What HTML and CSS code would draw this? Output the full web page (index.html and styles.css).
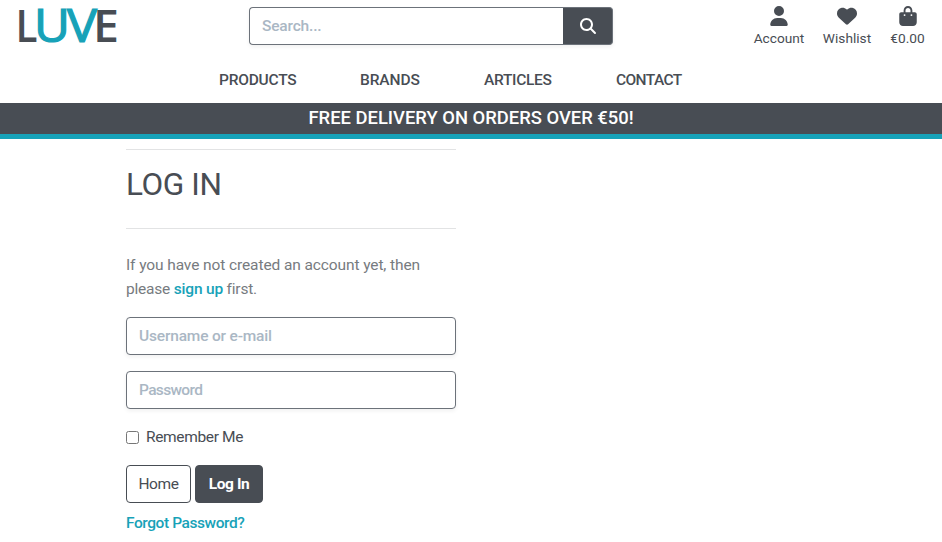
FILE: index.html
```html
<!DOCTYPE html>
<html lang="en">
<head>
<meta charset="utf-8">
<title>Log In</title>
<link rel="stylesheet" href="styles.css">
</head>
<body>
<header class="header">
  <a class="logo">
    <svg width="110" height="60" viewBox="0 0 110 60" font-size="46">
      <g class="logo-dark"><text x="-1.500" y="42" textLength="22" lengthAdjust="spacingAndGlyphs">L</text><text x="76" y="42" textLength="26" lengthAdjust="spacingAndGlyphs">E</text></g>
      <g class="logo-teal"><text x="17" y="41.500" font-size="45" textLength="36" lengthAdjust="spacingAndGlyphs">U</text><text x="50" y="41.500" font-size="45" textLength="30" lengthAdjust="spacingAndGlyphs">V</text></g>
    </svg>
  </a>
  <form class="search">
    <input class="search-input" type="text" placeholder="Search...">
    <button class="search-button" type="button" aria-label="Search">
      <svg width="16" height="16" viewBox="0 0 512 512" fill="currentColor"><path d="M416 208c0 45.900-14.900 88.300-40 122.700L502.600 457.400c12.500 12.500 12.500 32.800 0 45.300s-32.800 12.500-45.300 0L330.700 376c-34.400 25.200-76.800 40-122.700 40C93.100 416 0 322.900 0 208S93.100 0 208 0S416 93.100 416 208zM208 352a144 144 0 1 0 0-288 144 144 0 1 0 0 288z"/></svg>
    </button>
  </form>
  <div class="tools">
    <a class="tool account"><svg width="18" height="20" viewBox="0 0 448 512"><path d="M224 256A128 128 0 1 0 224 0a128 128 0 1 0 0 256zm-45.700 48C79.800 304 0 383.800 0 482.300C0 498.700 13.300 512 29.700 512H418.300c16.400 0 29.700-13.300 29.700-29.700C448 383.800 368.200 304 269.700 304H178.300z"/></svg><span>Account</span></a>
    <a class="tool wishlist"><svg width="20" height="20" viewBox="0 0 512 512"><path d="M47.600 300.400L228.300 469.100c7.500 7 17.400 10.900 27.700 10.900s20.200-3.900 27.700-10.900L464.400 300.400c30.400-28.300 47.600-68 47.600-109.500v-5.800c0-69.900-50.500-129.500-119.400-141C347 36.500 300.600 51.400 268 84L256 96 244 84c-32.600-32.600-79-47.500-124.600-39.900C50.500 55.600 0 115.200 0 185.100v5.800c0 41.500 17.200 81.200 47.600 109.500z"/></svg><span>Wishlist</span></a>
    <a class="tool bag"><svg width="18" height="20" viewBox="0 0 448 512"><path d="M160 112c0-35.300 28.700-64 64-64s64 28.700 64 64v48H160V112zm-48 48H48c-26.500 0-48 21.500-48 48V416c0 53 43 96 96 96H352c53 0 96-43 96-96V208c0-26.500-21.500-48-48-48H336V112C336 50.100 285.900 0 224 0S112 50.100 112 112v48zm24 48a24 24 0 1 1 0 48 24 24 0 1 1 0-48zm152 24a24 24 0 1 1 48 0 24 24 0 1 1-48 0z"/></svg><span>€0.00</span></a>
  </div>
</header>
<nav class="nav">
  <a class="products">PRODUCTS</a><a class="brands">BRANDS</a><a class="articles">ARTICLES</a><a class="contact">CONTACT</a>
</nav>
<div class="banner"><span>FREE DELIVERY ON ORDERS OVER €50!</span></div>
<main class="login">
  <hr>
  <h2>LOG IN</h2>
  <hr>
  <p><span class="line-one">If you have not created an account yet, then</span><br><span class="line-two">please <a class="link">sign up</a> first.</span></p>
  <input class="field username" type="text" placeholder="Username or e-mail">
  <input class="field password" type="password" placeholder="Password">
  <label class="remember"><input type="checkbox"><span>Remember Me</span></label>
  <div class="actions"><button class="button home">Home</button><button class="button submit">Log In</button></div>
  <a class="link forgot">Forgot Password?</a>
</main>
</body>
</html>
```
FILE: styles.css
```css
* { box-sizing: border-box; }
body, input, button { font-family: Roboto, sans-serif; font-size: 15.5px; font-weight: 400; }
body { margin: 0; height: 542px; overflow: hidden; background: #fff; color: #484d54; line-height: 24px; white-space: nowrap; }
svg { display: block; overflow: visible; }
.header { display: flex; height: 68px; align-items: flex-start; }
.logo { width: 249px; padding: 0 0 0 17px; font-family: "Open Sans", sans-serif; }
.logo-dark { fill: #484d54; font-weight: 600; }
.logo-teal { fill: #17a2b8; stroke: #17a2b8; stroke-width: 1.2px; font-weight: 400; }
.search { display: flex; width: 364px; height: 38px; margin-top: 7px; box-shadow: 0 2px 4px rgba(0,0,0,.06); border-radius: 4px; }
.search-input { flex: 1; min-width: 0; border: 1px solid #6c727a; border-right: 0; border-radius: 4px 0 0 4px; padding: 0 12px; }
.search-button { width: 50px; border: 1px solid #6c727a; border-left: 0; border-radius: 0 4px 4px 0; background: #484d54; color: #fff; display: flex; align-items: center; justify-content: center; padding: 0; }
::placeholder { color: #aab7c4; opacity: 1; font-weight: 500; letter-spacing: -.18px; }
.password::placeholder { letter-spacing: -.65px; }
.tools { display: flex; gap: 18px; margin: 6px 0 0 141px; }
.tool { display: flex; flex-direction: column; align-items: center; font-size: 13.7px; line-height: 24px; }
.tool svg { fill: #484d54; }
.account { width: 50px; }
.wishlist { width: 50px; }
.bag { width: 35px; }
.nav { display: flex; height: 35px; gap: 64px; padding-left: 219px; line-height: 24px; font-size: 15.5px; font-weight: 500; letter-spacing: -.22px; }
.products { width: 77px; }
.brands { width: 60px; letter-spacing: -.1px; }
.articles { width: 68px; letter-spacing: -.3px; }
.contact { letter-spacing: -.6px; }
.banner { height: 36px; background: #484d54; border-bottom: 5px solid #17a2b8; color: #fff; text-align: center; font-size: 18.4px; font-weight: 500; line-height: 30px; }
.login { width: 330px; margin-left: 126px; padding-top: 10px; display: flex; flex-direction: column; align-items: flex-start; }
hr { width: 100%; height: 1px; margin: 0; border: 0; background: #e2e3e4; }
h2 { margin: 16px 0 24px; font-size: 31.5px; font-weight: 400; line-height: 38px; letter-spacing: -.4px; }
p { margin: 24px 0 16px; color: #777b80; letter-spacing: -.1px; }
.link { color: #17a2b8; font-weight: 500; letter-spacing: -.2px; }
.line-two { letter-spacing: -.2px; }
.field { width: 330px; height: 38px; margin-bottom: 16px; border: 1px solid #6c727a; border-radius: 4px; padding: 0 12px; box-shadow: 0 2px 4px rgba(0,0,0,.06); }
.remember { display: flex; align-items: center; gap: 7px; height: 24px; letter-spacing: -.35px; }
.remember input { width: 13px; height: 13px; margin: 0; }
.actions { display: flex; gap: 4px; margin: 16px 0 8px; }
.button { height: 38px; padding: 0; border: 1px solid #484d54; border-radius: 4px; background: #fff; color: #484d54; letter-spacing: -.4px; }
.home { width: 65px; }
.submit { width: 68px; background: #484d54; color: #fff; font-weight: 700; }
.forgot { letter-spacing: -.42px; }
```
